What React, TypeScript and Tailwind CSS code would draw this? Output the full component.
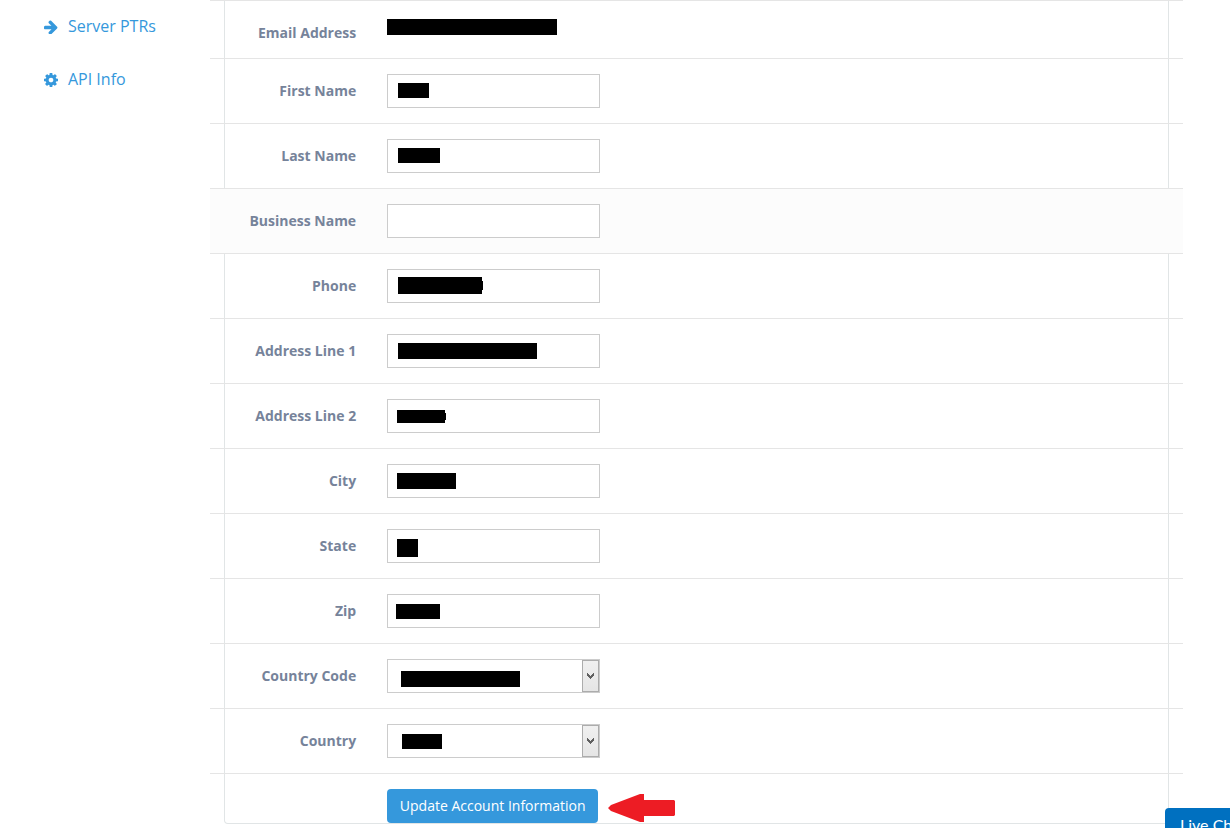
import { ReactNode } from "react";
import clsx from "clsx";

type Field = {
  id: string;
  label: string;
  mask?: string;
  notch?: string;
  select?: boolean;
  highlighted?: boolean;
};

const fields: Field[] = [
  { id: "first-name", label: "First Name", mask: "left-[11px] top-[9px] w-[31px] h-[15px]" },
  { id: "last-name", label: "Last Name", mask: "left-[11px] top-[9px] w-[42px] h-[15px]" },
  { id: "business-name", label: "Business Name", highlighted: true },
  {
    id: "phone",
    label: "Phone",
    mask: "left-[11px] top-[8px] w-[84px] h-[17px]",
    notch: "top-[4px] h-[9px]",
  },
  { id: "address-1", label: "Address Line 1", mask: "left-[11px] top-[9px] w-[139px] h-[16px]" },
  {
    id: "address-2",
    label: "Address Line 2",
    mask: "left-[10px] top-[11px] w-[48px] h-[13px]",
    notch: "top-[3px] h-[7px]",
  },
  { id: "city", label: "City", mask: "left-[10px] top-[9px] w-[59px] h-[16px]" },
  { id: "state", label: "State", mask: "left-[10px] top-[10px] w-[21px] h-[18px]" },
  { id: "zip", label: "Zip", mask: "left-[9px] top-[10px] w-[44px] h-[15px]" },
  {
    id: "country-code",
    label: "Country Code",
    mask: "left-[14px] top-[12px] w-[119px] h-[16px]",
    select: true,
  },
  {
    id: "country",
    label: "Country",
    mask: "left-[15px] top-[10px] w-[40px] h-[15px]",
    select: true,
  },
];

function ArrowIcon() {
  return (
    <svg viewBox="0 128 1536 1536" className="size-[14px]" fill="currentColor" aria-hidden="true">
      <path d="M1472 960q0 54-37 91l-651 651q-39 37-91 37-51 0-90-37l-75-75q-38-38-38-91t38-91l293-293h-704q-52 0-84.500-37.500t-32.500-90.500v-128q0-53 32.500-90.500t84.500-37.500h704l-293-294q-38-36-38-90t38-90l75-75q38-38 90-38 53 0 91 38l651 651q37 35 37 90z" />
    </svg>
  );
}

function CogIcon() {
  return (
    <svg viewBox="0 128 1536 1536" className="size-[14px]" fill="currentColor" aria-hidden="true">
      <path d="M1024 896q0-106-75-181t-181-75-181 75-75 181 75 181 181 75 181-75 75-181zm512-109v222q0 12-8 23t-20 13l-185 28q-19 54-39 91 35 50 107 138 10 12 10 25t-9 23q-27 37-99 108t-94 71q-12 0-26-9l-138-108q-44 23-91 38-16 136-29 186-7 28-36 28h-222q-14 0-24.500-8.500t-11.500-21.500l-28-184q-49-16-90-37l-141 107q-10 9-25 9-14 0-25-11-126-114-165-168-7-10-7-23 0-12 8-23 15-21 51-66.500t54-70.500q-27-50-41-99l-183-27q-13-2-21-12.500t-8-23.500v-222q0-12 8-23t19-13l186-28q14-46 39-92-40-57-107-138-10-12-10-24 0-10 9-23 26-36 98.500-107.500t94.500-71.500q13 0 26 10l138 107q44-23 91-38 16-136 29-186 7-28 36-28h222q14 0 24.500 8.500t11.500 21.500l28 184q49 16 90 37l142-107q9-9 24-9 13 0 25 10 129 119 165 170 7 8 7 22 0 12-8 23-15 21-51 66.500t-54 70.500q26 50 41 98l183 28q13 2 21 12.500t8 23.500z" />
    </svg>
  );
}

function SidebarLink({ icon, children }: { icon: ReactNode; children: ReactNode }) {
  return (
    <a href="#" className="flex items-center gap-2.5 h-[53px] pl-11 text-base text-[#3598dc]">
      {icon}
      <span className="-mt-0.5">{children}</span>
    </a>
  );
}

function Control({ field }: { field: Field }) {
  return (
    <div className="relative h-[34px]">
      {field.select ? (
        <>
          <select
            id={field.id}
            className="block w-full h-full appearance-none border border-[#ccc] bg-white px-3 text-sm"
          />
          <span className="absolute right-px inset-y-px w-[17px] flex items-center justify-center border border-[#acacac] bg-linear-to-b from-[#f0f0f0] to-[#e5e5e5] pointer-events-none">
            <svg viewBox="0 0 7 6" className="w-[7px] h-[6px]" aria-hidden="true">
              <path d="M0 0h1v1h1v1h1v1h1v-1h1v-1h1v-1h1v3h-1v1h-1v1h-1v1h-1v-1h-1v-1h-1v-1h-1z" fill="#606060" />
            </svg>
          </span>
        </>
      ) : (
        <input
          id={field.id}
          type="text"
          className="block w-full h-full border border-[#ccc] bg-white px-3 text-sm"
        />
      )}
      {field.mask && (
        <span className={clsx("absolute bg-black pointer-events-none", field.mask)}>
          {field.notch && <span className={clsx("absolute left-full w-px bg-black", field.notch)} />}
        </span>
      )}
    </div>
  );
}

function FieldRow({ field }: { field: Field }) {
  return (
    <div
      className={clsx(
        "-mx-[15px] grid grid-cols-12 border-t border-[#e5e5e5] py-[15px]",
        field.highlighted && "bg-[#fcfcfc]"
      )}
    >
      <label
        htmlFor={field.id}
        className="col-span-2 pr-4 pt-[7px] text-right text-sm font-bold text-[#76839a]"
      >
        {field.label}
      </label>
      <div className="col-span-3 px-[15px]">
        <Control field={field} />
      </div>
    </div>
  );
}

export default function App() {
  return (
    <div className="flex min-h-screen bg-white font-['Open_Sans',sans-serif]">
      <nav className="w-[210px] shrink-0">
        <SidebarLink icon={<ArrowIcon />}>Server PTRs</SidebarLink>
        <SidebarLink icon={<CogIcon />}>API Info</SidebarLink>
      </nav>

      <main className="flex-1 pl-[14px] pr-[61px]">
        <form
          className="rounded-b border border-t-0 border-[#e1e5e6]"
          onSubmit={(e) => e.preventDefault()}
        >
          <div className="-mx-[15px] grid grid-cols-12 border-t border-[#e5e5e5] py-[15px]">
            <div className="col-span-2 pr-4 pt-[7px] text-right text-sm font-bold text-[#76839a]">
              Email Address
            </div>
            <div className="col-span-3 px-[15px] pt-[3px]">
              <span className="block w-[170px] h-[16px] bg-black" />
            </div>
          </div>

          {fields.map((field) => (
            <FieldRow key={field.id} field={field} />
          ))}

          <div className="-mx-[15px] grid grid-cols-12 border-t border-[#e5e5e5] pt-[15px]">
            <div className="col-start-3 col-span-10 flex items-center gap-2.5 pl-[15px]">
              <button
                type="submit"
                className="h-[34px] w-[211px] rounded bg-[#3598dc] text-center text-sm text-white whitespace-nowrap"
              >
                Update Account Information
              </button>
              <svg viewBox="0 0 67 28" className="w-[67px] h-[28px] mt-1" aria-hidden="true">
                <path d="M0 14L3 11L32 0H36V6H66L67 7V21L66 22H36V28H32L3 17Z" fill="#ed1c24" />
              </svg>
            </div>
          </div>
        </form>
      </main>

      <button
        type="button"
        className="fixed right-0 bottom-0 w-[65px] h-5 overflow-hidden rounded-tl bg-[#0070c0] pl-[15px] pt-[5px] text-left font-['Lato',sans-serif] text-base text-white whitespace-nowrap"
      >
        Live Chat
      </button>
    </div>
  );
}
